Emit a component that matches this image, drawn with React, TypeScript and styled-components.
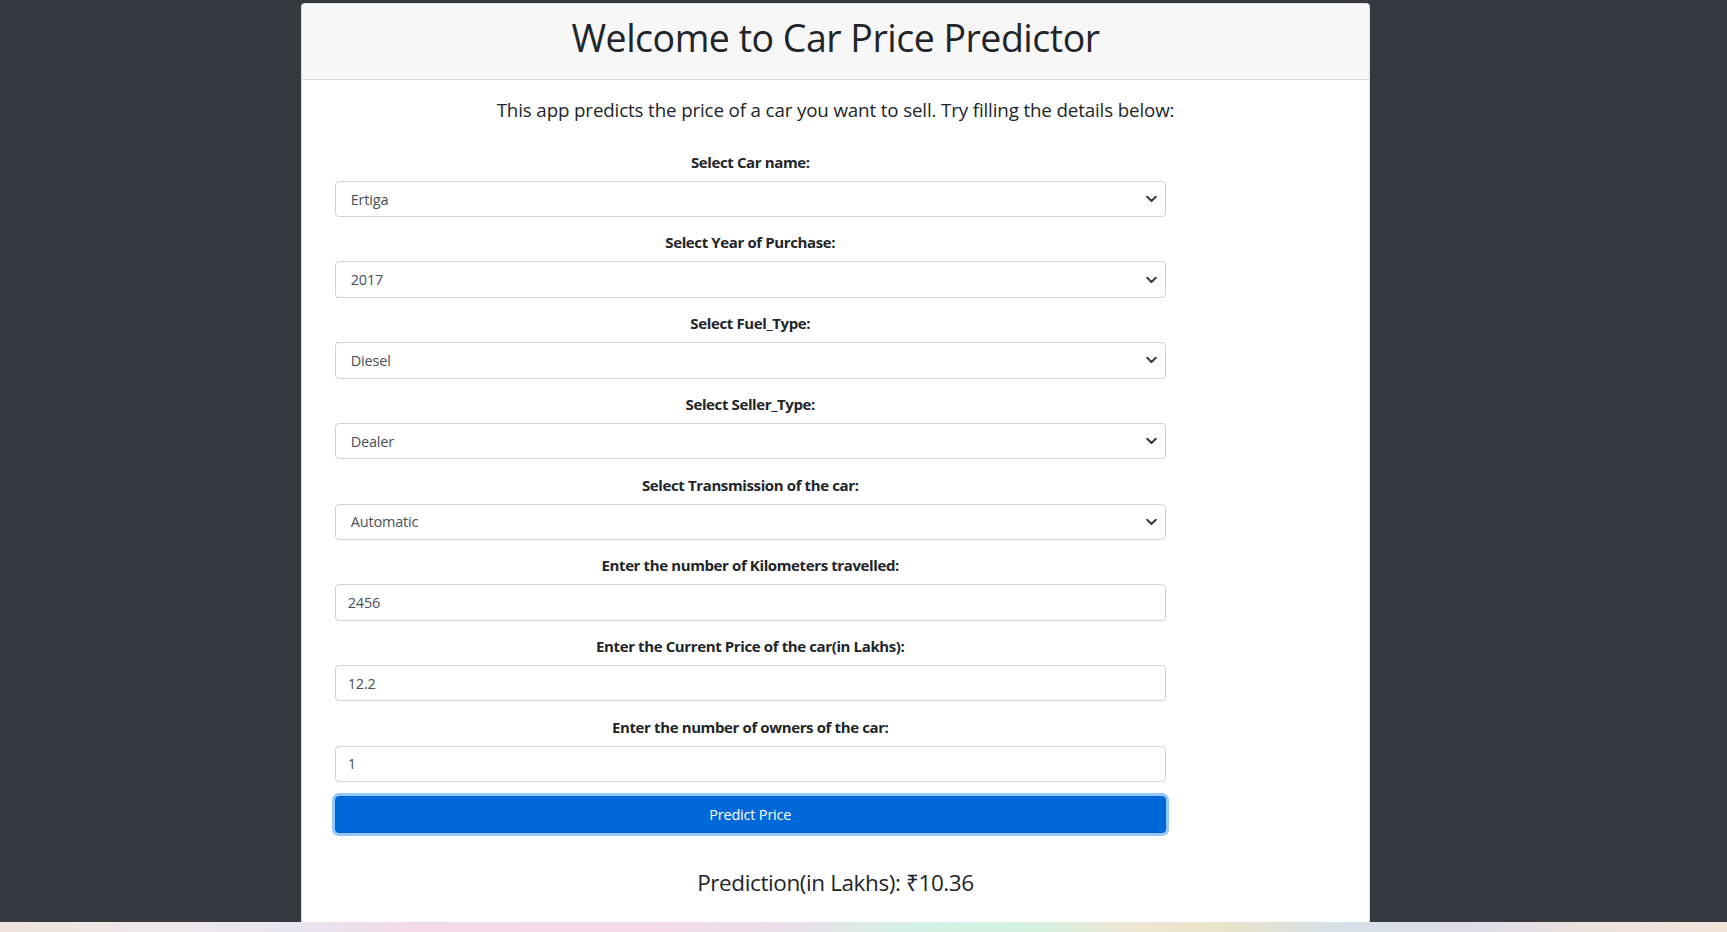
import React from "react";
import styled, { createGlobalStyle } from "styled-components";

const GlobalStyle = createGlobalStyle`
  html, body {
    margin: 0;
    padding: 0;
    background: #343a40;
    font-family: "Open Sans", "Noto Sans", "DejaVu Sans", sans-serif;
    color: #212529;
    overflow: hidden;
  }
  * { box-sizing: border-box; }
`;

const Page = styled.div`
  display: flex;
  flex-direction: column;
  height: 100vh;
`;

const Main = styled.main`
  flex: 1;
  min-height: 0;
  overflow: hidden;
  padding: 3px 0 0 301px;
`;

const Card = styled.section`
  width: 1069px;
  background: #ffffff;
  border: 1px solid rgba(0, 0, 0, 0.125);
  border-radius: 4px;
  overflow: hidden;
`;

const CardHeader = styled.header`
  background: #f7f7f7;
  border-bottom: 1px solid rgba(0, 0, 0, 0.125);
  padding: 11.25px 18.75px;
  text-align: center;
`;

const Title = styled.h1`
  margin: 0 0 7.5px;
  font-size: 37.5px;
  font-weight: 500;
  line-height: 1.2;
  letter-spacing: -0.5px;
  color: #212529;
`;

const CardBody = styled.div`
  padding: 18.75px;
`;

const Lead = styled.h5`
  margin: 0 0 29.5px;
  font-size: 18.75px;
  font-weight: 400;
  line-height: 1.2;
  text-align: center;
  letter-spacing: -0.14px;
  color: #212529;
`;

const Form = styled.form`
  width: 831px;
  margin: 0 0 0 14px;
`;

const Group = styled.div`
  margin-bottom: 14.2px;
`;

const Label = styled.label`
  display: block;
  text-align: center;
  font-size: 15px;
  font-weight: 700;
  line-height: 22.5px;
  margin-bottom: 7.5px;
  letter-spacing: -0.38px;
  color: #212529;
`;

const SelectWrap = styled.div`
  position: relative;
`;

const fieldBase = `
  display: block;
  width: 100%;
  height: 36.5px;
  font-family: inherit;
  font-size: 14.5px;
  color: #495057;
  background: #ffffff;
  border: 1px solid #ced4da;
  border-radius: 4px;
  outline: none;
  letter-spacing: -0.2px;
`;

const Select = styled.select`
  ${fieldBase}
  appearance: none;
  -webkit-appearance: none;
  padding: 0 36px 0 15px;
`;

const Chevron = styled.svg`
  position: absolute;
  right: 9px;
  top: 50%;
  width: 11px;
  height: 7px;
  transform: translateY(-50%);
  pointer-events: none;
`;

const Input = styled.input`
  ${fieldBase}
  padding: 0 12px;
`;

const Button = styled.button`
  display: block;
  width: 100%;
  height: 36.5px;
  font-family: inherit;
  font-size: 14.5px;
  color: #ffffff;
  background: #0069d9;
  border: 1px solid #0062cc;
  border-radius: 4px;
  box-shadow: 0 0 0 3px rgba(38, 143, 255, 0.5);
  letter-spacing: -0.2px;
  cursor: pointer;
`;

const Prediction = styled.h4`
  margin: 36.5px 0 7.5px;
  font-size: 22.5px;
  font-weight: 400;
  line-height: 1.2;
  text-align: center;
  letter-spacing: -0.4px;
  color: #212529;
`;

const Taskbar = styled.div`
  height: 10px;
  flex-shrink: 0;
  background: linear-gradient(
    90deg,
    #efe3da 0%,
    #eee9ea 10%,
    #e7e5f0 17%,
    #f4dae6 24%,
    #f5dce8 38%,
    #ebdfe9 45%,
    #d3f2e3 53%,
    #d5f1e0 60%,
    #efe6d2 66%,
    #e8e4c9 71%,
    #d6e0e6 77%,
    #dcdde9 85%,
    #ede2dc 92%,
    #f3e4da 100%
  );
`;

type SelectField = { label: string; value: string; options: string[] };
type InputField = { label: string; value: string };

const selects: SelectField[] = [
  { label: "Select Car name:", value: "Ertiga", options: ["Ertiga", "Swift", "City", "Ciaz"] },
  { label: "Select Year of Purchase:", value: "2017", options: ["2017", "2016", "2015"] },
  { label: "Select Fuel_Type:", value: "Diesel", options: ["Diesel", "Petrol", "CNG"] },
  { label: "Select Seller_Type:", value: "Dealer", options: ["Dealer", "Individual"] },
  { label: "Select Transmission of the car:", value: "Automatic", options: ["Automatic", "Manual"] },
];

const inputs: InputField[] = [
  { label: "Enter the number of Kilometers travelled:", value: "2456" },
  { label: "Enter the Current Price of the car(in Lakhs):", value: "12.2" },
  { label: "Enter the number of owners of the car:", value: "1" },
];

export default function App() {
  return (
    <>
      <GlobalStyle />
      <Page>
        <Main>
          <Card>
            <CardHeader>
              <Title>Welcome to Car Price Predictor</Title>
            </CardHeader>
            <CardBody>
              <Lead>This app predicts the price of a car you want to sell. Try filling the details below:</Lead>
              <Form onSubmit={(e) => e.preventDefault()}>
                {selects.map((f) => (
                  <Group key={f.label}>
                    <Label>{f.label}</Label>
                    <SelectWrap>
                      <Select defaultValue={f.value}>
                        {f.options.map((o) => (
                          <option key={o}>{o}</option>
                        ))}
                      </Select>
                      <Chevron viewBox="0 0 11 7" fill="none">
                        <path d="M1.2 1.2 5.5 5.5 9.8 1.2" stroke="#343a40" strokeWidth="2" strokeLinecap="round" strokeLinejoin="round" />
                      </Chevron>
                    </SelectWrap>
                  </Group>
                ))}
                {inputs.map((f) => (
                  <Group key={f.label}>
                    <Label>{f.label}</Label>
                    <Input type="text" defaultValue={f.value} />
                  </Group>
                ))}
                <Button type="submit">Predict Price</Button>
              </Form>
              <Prediction>Prediction(in Lakhs): ₹10.36</Prediction>
            </CardBody>
          </Card>
        </Main>
        <Taskbar />
      </Page>
    </>
  );
}
